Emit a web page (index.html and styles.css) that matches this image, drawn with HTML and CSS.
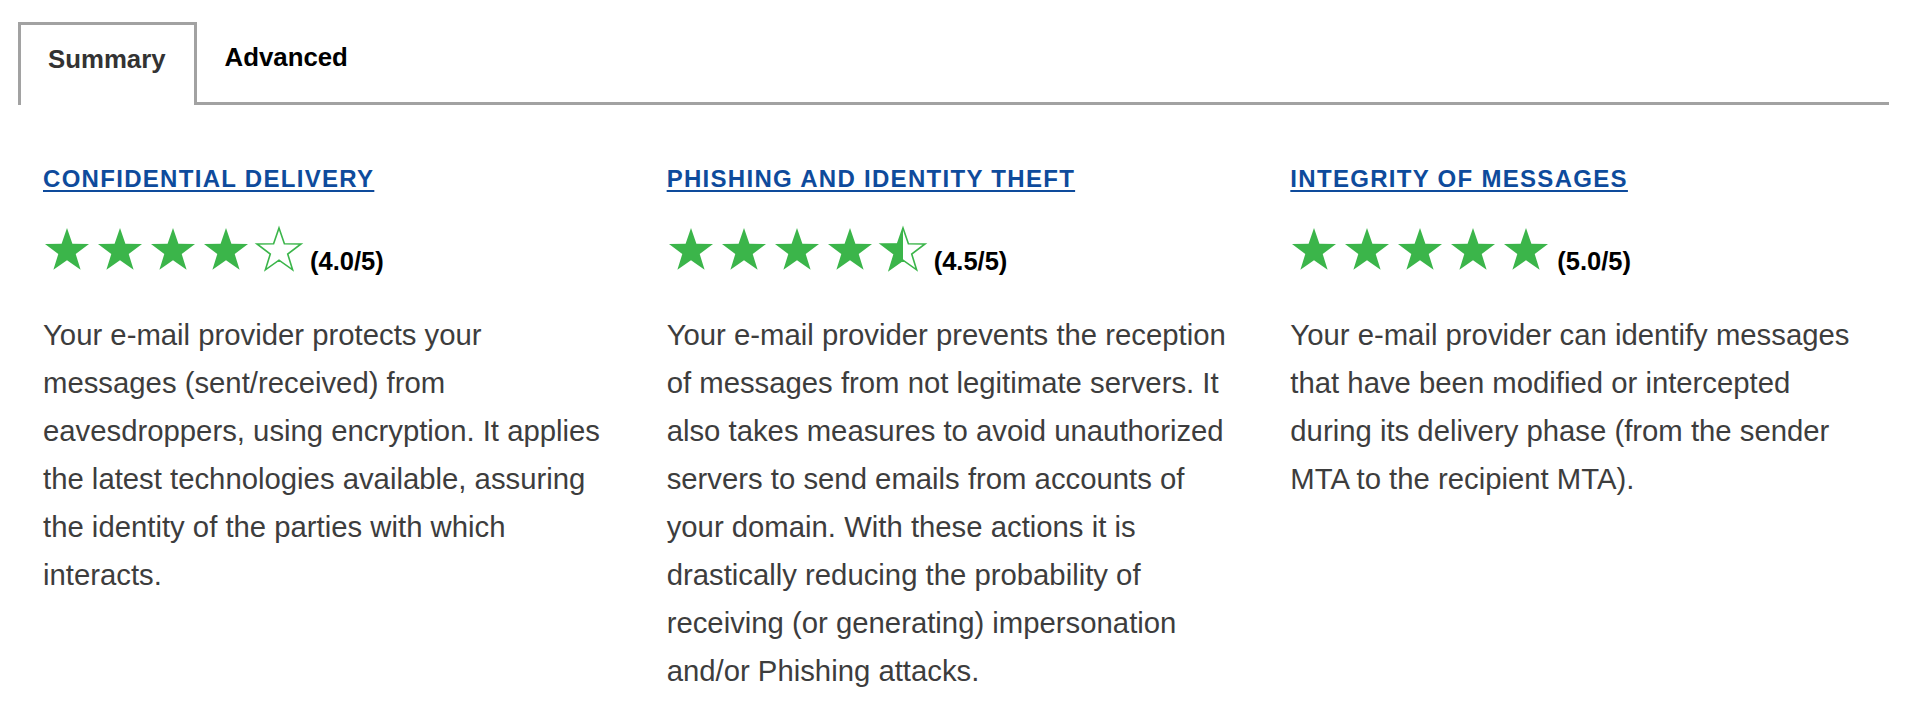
FILE: index.html
```html
<!doctype html>
<html>
<head>
<meta charset="UTF-8">
<meta name="viewport" content="width=device-width, initial-scale=1">
<title>E-mail security summary</title>
<link rel="stylesheet" href="styles.css">
</head>

<body>
<svg class="defs" width="0" height="0" aria-hidden="true">
<defs>
<polygon id="star" points="22,0 27.4,15.7 44,16 30.7,26 35.6,41.8 22,32.2 8.4,41.8 13.3,26 0,16 16.6,15.7"/>
<clipPath id="half"><rect x="0" y="0" width="22" height="42"/></clipPath>
</defs>
</svg>

<div class="tabs">
<div class="tab tab-active">Summary</div>
<div class="tab">Advanced</div>
</div>

<div class="panel">

<div class="col">
<h3 class="title"><a href="#">CONFIDENTIAL DELIVERY</a></h3>
<div class="rating"><svg class="star" viewBox="0 0 44 42"><use href="#star" class="fill"/></svg><svg class="star" viewBox="0 0 44 42"><use href="#star" class="fill"/></svg><svg class="star" viewBox="0 0 44 42"><use href="#star" class="fill"/></svg><svg class="star" viewBox="0 0 44 42"><use href="#star" class="fill"/></svg><svg class="star" viewBox="0 0 44 42"><use href="#star" class="line"/></svg><span class="score">(4.0/5)</span></div>
<p class="desc">Your e-mail provider protects your messages (sent/received) from eavesdroppers, using encryption. It applies the latest technologies available, assuring the identity of the parties with which interacts.</p>
</div>

<div class="col">
<h3 class="title"><a href="#">PHISHING AND IDENTITY THEFT</a></h3>
<div class="rating"><svg class="star" viewBox="0 0 44 42"><use href="#star" class="fill"/></svg><svg class="star" viewBox="0 0 44 42"><use href="#star" class="fill"/></svg><svg class="star" viewBox="0 0 44 42"><use href="#star" class="fill"/></svg><svg class="star" viewBox="0 0 44 42"><use href="#star" class="fill"/></svg><svg class="star" viewBox="0 0 44 42"><use href="#star" class="fill" clip-path="url(#half)"/><use href="#star" class="line"/></svg><span class="score">(4.5/5)</span></div>
<p class="desc">Your e-mail provider prevents the reception of messages from not legitimate servers. It also takes measures to avoid unauthorized servers to send emails from accounts of your domain. With these actions it is drastically reducing the probability of receiving (or generating) impersonation and/or Phishing attacks.</p>
</div>

<div class="col">
<h3 class="title"><a href="#">INTEGRITY OF MESSAGES</a></h3>
<div class="rating"><svg class="star" viewBox="0 0 44 42"><use href="#star" class="fill"/></svg><svg class="star" viewBox="0 0 44 42"><use href="#star" class="fill"/></svg><svg class="star" viewBox="0 0 44 42"><use href="#star" class="fill"/></svg><svg class="star" viewBox="0 0 44 42"><use href="#star" class="fill"/></svg><svg class="star" viewBox="0 0 44 42"><use href="#star" class="fill"/></svg><span class="score">(5.0/5)</span></div>
<p class="desc">Your e-mail provider can identify messages that have been modified or intercepted during its delivery phase (from the sender MTA to the recipient MTA).</p>
</div>

</div>
</body>
</html>
```

FILE: styles.css
```css
body{margin:0; padding:0; background-color:#ffffff; font-family:"Liberation Sans", Arial, Helvetica, sans-serif; color:#3b3b3b;}
.defs{position:absolute; width:0; height:0; overflow:hidden;}

/* tabs */
.tabs{display:flex; align-items:flex-start; margin:22px 31px 0 18px; border-bottom:3px solid #a2a2a2;}
.tab{padding:21px 28px 0 28px; font-size:25.8px; line-height:29px; font-weight:bold; color:#000000; cursor:pointer;}
.tab-active{padding:20px 28px 31px 27px; margin-bottom:-3px; border:3px solid #a2a2a2; border-bottom:0; background-color:#ffffff; color:#333333;}

/* summary columns */
.panel{display:grid; grid-template-columns:repeat(3, 1fr); margin:0 31px 0 18px; padding-top:60px;}
.col{padding:0 25px; min-width:0;}
.title{margin:0; font-size:24px; line-height:28px; font-weight:bold; letter-spacing:1.3px;}
.title a{color:#0e4b9c; text-decoration:underline; text-decoration-thickness:2px; text-underline-offset:3px;}

.rating{margin-top:35px; font-size:25.5px; line-height:29px; font-weight:bold; color:#000000; white-space:nowrap;}
.star{width:44px; height:42px; vertical-align:baseline; margin-right:9px; overflow:visible;}
.star:first-child{margin-left:2px;}
.fill{fill:#3bb54a;}
.line{fill:none; stroke:#3bb54a; stroke-width:1.6px;}

.desc{margin:35px 0 0 0; font-size:29.3px; line-height:48px; color:#3d3d3d;}
```
